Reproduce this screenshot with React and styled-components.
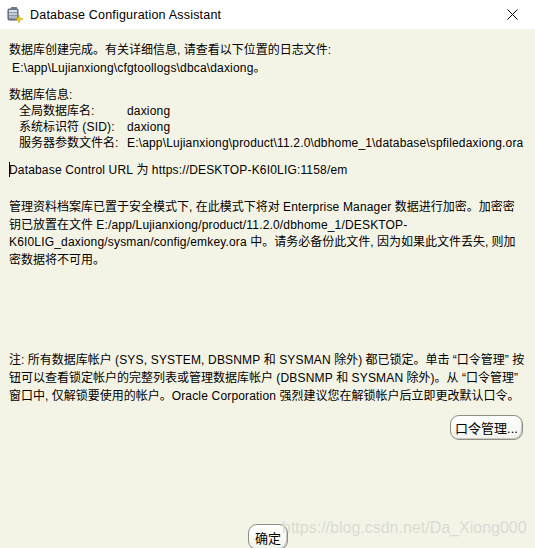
import React from "react";
import styled, { createGlobalStyle } from "styled-components";

const Global = createGlobalStyle`
  html, body { margin: 0; padding: 0; background: #f4f4e6; }
  body { width: 535px; height: 548px; overflow: hidden; }
`;

const Window = styled.div`
  position: relative;
  width: 535px;
  height: 548px;
  display: flex;
  flex-direction: column;
  overflow: hidden;
  background: #f4f4e6;
`;

const TitleBar = styled.div`
  height: 29px;
  flex: none;
  background: #ffffff;
  display: flex;
  align-items: center;
  padding: 0 0 0 6px;
  gap: 7px;
  font-family: "Liberation Sans", Arial, sans-serif;
  font-size: 12.5px;
  color: #000;
`;

const TitleText = styled.span`
  flex: 1;
  letter-spacing: 0.2px;
`;

const CloseBox = styled.div`
  width: 46px;
  height: 29px;
  display: flex;
  align-items: center;
  justify-content: center;
  padding-left: 1px;
`;

const Body = styled.div`
  flex: 1;
  display: flex;
  flex-direction: column;
  padding: 12px 9px 0 9px;
  font-family: "Liberation Sans", "Noto Sans CJK SC", sans-serif;
  font-size: 12px;
  color: #000;
`;

const L = styled.span`
  letter-spacing: 0.17px;
`;

const Para = styled.div`
  line-height: ${(p) => p.$lh || 18}px;
  margin-top: ${(p) => p.$mt || 0}px;
  white-space: nowrap;
`;

const Line = styled.div`
  padding-left: ${(p) => p.$indent || 0}px;
`;

const InfoRow = styled.div`
  display: grid;
  grid-template-columns: 108px auto;
  padding-left: 10px;
`;

const Caret = styled.span`
  display: inline-block;
  width: 1px;
  height: 15px;
  background: #000;
  vertical-align: -3px;
  margin-right: -1px;
`;

const Spacer = styled.div`
  flex: ${(p) => p.$fixed ? `0 0 ${p.$fixed}px` : 1};
`;

const ButtonRow = styled.div`
  display: flex;
  justify-content: flex-end;
  margin-top: ${(p) => p.$mt || 0}px;
  padding-right: ${(p) => p.$pr || 0}px;
`;

const Button = styled.button`
  height: ${(p) => p.$h || 25}px;
  width: ${(p) => p.$w}px;
  padding: 0;
  border: 1px solid #8e8e86;
  border-radius: 9px;
  background: linear-gradient(#ffffff, #f3f3ec);
  box-shadow: inset -1px -1px 0 #c9c9c0;
  font-family: "Liberation Sans", "Noto Sans CJK SC", sans-serif;
  font-size: 13px;
  color: #000;
  display: flex;
  align-items: center;
  justify-content: center;
`;

const Footer = styled.div`
  height: 24px;
  display: flex;
  justify-content: center;
  padding-left: 1px;
`;

const Watermark = styled.div`
  position: absolute;
  left: 282px;
  top: 519px;
  font-family: "Liberation Sans", Arial, sans-serif;
  font-size: 16px;
  color: rgba(215, 215, 210, 0.9);
  white-space: nowrap;
  pointer-events: none;
`;

const DbIcon = () => (
  <svg width="17" height="17" viewBox="0 0 17 17">
    <rect x="2" y="3" width="10" height="11" rx="1" fill="#8c96a6" stroke="#4a5566" strokeWidth="1" />
    <rect x="3" y="4" width="8" height="2" fill="#d8dde6" />
    <rect x="3" y="7" width="8" height="2" fill="#c4ccd8" />
    <rect x="3" y="10" width="8" height="2" fill="#b0b9c8" />
    <rect x="5" y="1" width="6" height="2" fill="#6f7a8c" />
    <path d="M13 9 L14 12 L17 13 L14 14 L13 17 L12 14 L9 13 L12 12 Z" fill="#f2d21a" stroke="#b89a00" strokeWidth="0.5" />
  </svg>
);

const CloseIcon = () => (
  <svg width="11" height="11" viewBox="0 0 11 11">
    <path d="M0.5 0.5 L10.5 10.5 M10.5 0.5 L0.5 10.5" stroke="#000" strokeWidth="1" />
  </svg>
);

export default function App() {
  return (
    <>
      <Global />
      <Window>
        <TitleBar>
          <DbIcon />
          <TitleText>Database Configuration Assistant</TitleText>
          <CloseBox>
            <CloseIcon />
          </CloseBox>
        </TitleBar>
        <Body>
          <Para>
            <Line>数据库创建完成。有关详细信息, 请查看以下位置的日志文件:</Line>
            <Line $indent={3}><L>E:\app\Lujianxiong\cfgtoollogs\dbca\daxiong</L>。</Line>
          </Para>
          <Para $lh={16} $mt={10}>
            <Line>数据库信息:</Line>
            <InfoRow>
              <span>全局数据库名:</span>
              <L>daxiong</L>
            </InfoRow>
            <InfoRow>
              <span>系统标识符 <L>(SID)</L>:</span>
              <L>daxiong</L>
            </InfoRow>
            <InfoRow>
              <span>服务器参数文件名:</span>
              <L>E:\app\Lujianxiong\product\11.2.0\dbhome_1\database\spfiledaxiong.ora</L>
            </InfoRow>
          </Para>
          <Para $mt={10}>
            <Line>
              <Caret />
              <L>Database Control URL</L> 为 <L>https://DESKTOP-K6I0LIG:1158/em</L>
            </Line>
          </Para>
          <Para $lh={17.7} $mt={20}>
            <Line>管理资料档案库已置于安全模式下, 在此模式下将对 <L>Enterprise Manager</L> 数据进行加密。加密密</Line>
            <Line>钥已放置在文件 <L>E:/app/Lujianxiong/product/11.2.0/dbhome_1/DESKTOP-</L></Line>
            <Line><L>K6I0LIG_daxiong/sysman/config/emkey.ora</L> 中。请务必备份此文件, 因为如果此文件丢失, 则加</Line>
            <Line>密数据将不可用。</Line>
          </Para>
          <Spacer />
          <Para>
            <Line>注: 所有数据库帐户 <L>(SYS, SYSTEM, DBSNMP</L> 和 <L>SYSMAN</L> 除外) 都已锁定。单击 “口令管理” 按</Line>
            <Line>钮可以查看锁定帐户的完整列表或管理数据库帐户 <L>(DBSNMP</L> 和 <L>SYSMAN</L> 除外)。从 “口令管理”</Line>
            <Line>窗口中, 仅解锁要使用的帐户。<L>Oracle Corporation</L> 强烈建议您在解锁帐户后立即更改默认口令。</Line>
          </Para>
          <ButtonRow $mt={10} $pr={3}>
            <Button $w={73}>口令管理...</Button>
          </ButtonRow>
          <Spacer $fixed={84} />
          <Footer>
            <Button $w={40} $h={26}>确定</Button>
          </Footer>
        </Body>
        <Watermark>https://blog.csdn.net/Da_Xiong000</Watermark>
      </Window>
    </>
  );
}
